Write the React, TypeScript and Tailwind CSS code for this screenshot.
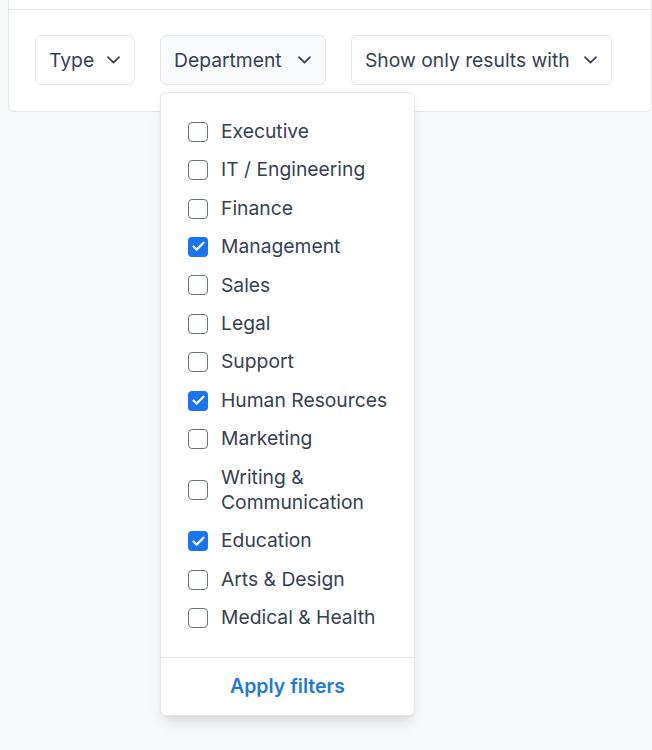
import { Check } from "lucide-react";

const departments = [
  { label: "Executive", checked: false },
  { label: "IT / Engineering", checked: false },
  { label: "Finance", checked: false },
  { label: "Management", checked: true },
  { label: "Sales", checked: false },
  { label: "Legal", checked: false },
  { label: "Support", checked: false },
  { label: "Human Resources", checked: true },
  { label: "Marketing", checked: false },
  { label: "Writing & Communication", checked: false },
  { label: "Education", checked: true },
  { label: "Arts & Design", checked: false },
  { label: "Medical & Health", checked: false },
];

function Chevron() {
  return (
    <svg width="13" height="8" viewBox="0 0 13 8" fill="none" className="shrink-0 text-gray-700">
      <path d="M1 1.2l5.5 5.5 5.5-5.5" stroke="currentColor" strokeWidth="1.7" strokeLinecap="round" strokeLinejoin="round" />
    </svg>
  );
}

function FilterButton({ label, active, width }: { label: string; active?: boolean; width: string }) {
  return (
    <button
      className={`flex h-[50px] items-center justify-between rounded-md border border-gray-200 pl-[13px] pr-[14px] text-[19.3px] text-gray-700 ${width} ${
        active ? "bg-gray-50" : "bg-white"
      }`}
    >
      <span>{label}</span>
      <Chevron />
    </button>
  );
}

export default function App() {
  return (
    <div
      className="min-h-[750px] bg-[#f8f9fb] pl-2"
      style={{ fontFamily: "Inter, 'Noto Sans', sans-serif" }}
    >
      {/* Card with filter bar */}
      <div className="rounded-b-md border border-t-0 border-gray-200 bg-white">
        <div className="h-[10px] border-b border-gray-200" />
        <div className="flex items-start gap-[25px] pb-[26px] pl-[26px] pt-[25px]">
          <FilterButton label="Type" width="w-[100px]" />
          <div className="relative">
            <FilterButton label="Department" width="w-[166px]" active />

            {/* Dropdown */}
            <div className="absolute left-0 top-[57px] z-10 w-[255px] rounded-md border border-gray-200 bg-white shadow-lg">
              <ul className="flex flex-col gap-[13px] pb-[26px] pl-[27px] pr-3 pt-[26px]">
                {departments.map((d) => (
                  <li key={d.label} className="flex items-center gap-[13px]">
                    {d.checked ? (
                      <span className="flex h-[20px] w-[20px] shrink-0 items-center justify-center rounded-[4px] bg-[#1a73f0]">
                        <Check className="h-[15px] w-[15px] text-white" strokeWidth={3.5} />
                      </span>
                    ) : (
                      <span className="h-[20px] w-[20px] shrink-0 rounded-[4px] border-[1.5px] border-gray-500" />
                    )}
                    <span className="text-[19.3px] leading-[25.4px] text-gray-700">{d.label}</span>
                  </li>
                ))}
              </ul>
              <div className="flex h-[58px] items-center justify-center border-t border-gray-200">
                <span className="text-[19.5px] font-semibold text-[#1d7ad8]">Apply filters</span>
              </div>
            </div>
          </div>
          <FilterButton label="Show only results with" width="w-[261px]" />
        </div>
      </div>
    </div>
  );
}
